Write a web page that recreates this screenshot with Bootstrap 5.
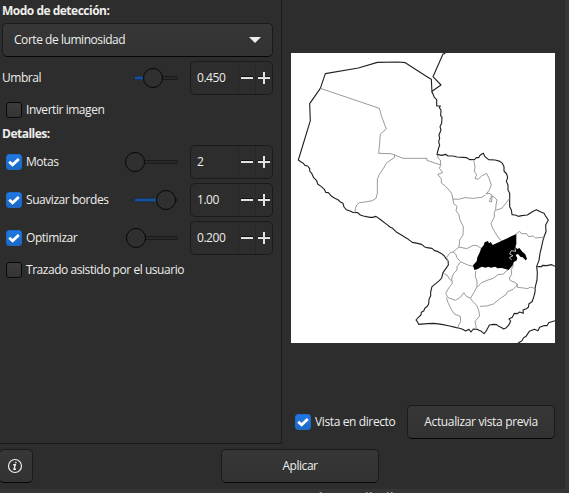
<!DOCTYPE html>
<html lang="es">
<head>
<meta charset="utf-8">
<meta name="viewport" content="width=device-width, initial-scale=1">
<title>Vectorizar mapa de bits</title>
<link href="https://cdn.jsdelivr.net/npm/bootstrap@5.3.0/dist/css/bootstrap.min.css" rel="stylesheet">
<style>
body{width:569px;height:493px;overflow:hidden;background:#353535;color:#eeeeec;font:12px/18px "Open Sans","Noto Sans",sans-serif;letter-spacing:-.45px}
.dialog{width:565px;height:489px;background:#2d2d2d}
.upper{height:444px}
.settings{width:282px;border-right:1px solid #1b1b1b;border-bottom:1px solid #1b1b1b;padding:2px 8px 0 2px}
.heading{font-weight:700;height:18px;letter-spacing:-.5px}
.heading.details{margin-top:3px}
.gtk-btn{border:1px solid #1b1b1b;border-bottom-color:#070707;border-radius:5px;background:linear-gradient(#373737,#323232);color:#eeeeec;font-size:12px;line-height:18px;letter-spacing:inherit;height:34px;padding:0}
.gtk-btn:hover{background:#3a3a3a;color:#fff}
.mode{height:34px;margin:3px 0 2px;padding:0 11px 0 11px;width:271px}
.opt{height:38px;width:271px}
.opt.short{height:25px}
.opt .name{width:131px;flex:none}
.tick{width:16px;height:16px;flex:none;border:1px solid #090909;border-radius:3px;background:linear-gradient(#3c3c3c,#343434);margin:0 4px}
.tick.on{background:linear-gradient(#2078e2,#1b68c6);border-color:#1d6bc9}
.tick svg{display:block;width:14px;height:14px}
.slider{width:50px;height:22px;flex:none;overflow:visible}
.rail{stroke:#1b1b1b;stroke-width:4;stroke-linecap:round}
.groove{stroke:#292929;stroke-width:2;stroke-linecap:round}
.fill{stroke:#15539e;stroke-width:3;stroke-linecap:round}
.knob{fill:#303030;stroke:#070707}
.spin{width:83px;height:34px;border:1px solid #1b1b1b;border-radius:5px;margin-left:auto}
.spin .num{width:47px;padding-left:6px}
.spin .pm{display:block;width:34px;height:32px;flex:none}
.preview{width:283px;padding-top:53px}
.map{display:block;width:264px;height:290px;background:#fff;margin-left:9px}
.live{margin-top:62px;padding-left:9px;width:273px;letter-spacing:-.38px}
.update{width:148px;letter-spacing:-.35px}
.actions{height:45px;padding-top:5px}
.info{width:34px;margin-left:-1px;padding-right:2px}
.apply{width:158px;margin-left:188px}
.under{height:4px;overflow:hidden;color:#a5a5a5;padding-left:288px;font-size:14px;font-weight:600;letter-spacing:0}
</style>
</head>
<body>
<svg width="0" height="0" class="position-absolute">
 <symbol id="check" viewBox="0 0 14 14"><path d="M2.2 6.7 5.6 9.8 11.8 4" fill="none" stroke="#fff" stroke-width="2.8"/></symbol>
 <symbol id="steps" viewBox="0 0 34 32"><path d="M.5 0V32M17.5 0V32" stroke="#272727"/><path d="M3 14.5H15M20 14.5H32" stroke="#111"/><path d="M3 16H15M20 16H32M26 10V22" stroke="#e2e2e0" stroke-width="2"/></symbol>
</svg>
<main class="dialog">
 <div class="upper d-flex">
  <section class="settings flex-shrink-0">
   <div class="heading">Modo de detección:</div>
   <button class="btn gtk-btn mode d-flex align-items-center justify-content-between"><span>Corte de luminosidad</span><svg width="12" height="7"><path d="M0 0H12L6 6Z" fill="#eeeeec"/></svg></button>
   <div class="opt d-flex align-items-center"><span class="name">Umbral</span><svg class="slider"><path class="rail" d="M3 11H43"/><path class="groove" d="M3 11H43"/><path class="fill" d="M3 11H15"/><circle class="knob" cx="20" cy="11" r="9.5"/></svg><div class="spin d-flex align-items-center"><span class="num">0.450</span><svg class="pm"><use href="#steps"/></svg></div></div>
   <div class="opt short d-flex align-items-center"><span class="tick"></span>Invertir imagen</div>
   <div class="heading details">Detalles:</div>
   <div class="opt d-flex align-items-center"><div class="name d-flex align-items-center"><span class="tick on"><svg><use href="#check"/></svg></span>Motas</div><svg class="slider"><path class="rail" d="M3 11H43"/><path class="groove" d="M3 11H43"/><circle class="knob" cx="2" cy="11" r="9.5"/></svg><div class="spin d-flex align-items-center"><span class="num">2</span><svg class="pm"><use href="#steps"/></svg></div></div>
   <div class="opt d-flex align-items-center"><div class="name d-flex align-items-center"><span class="tick on"><svg><use href="#check"/></svg></span>Suavizar bordes</div><svg class="slider"><path class="rail" d="M3 11H43"/><path class="groove" d="M3 11H43"/><path class="fill" d="M3 11H25"/><circle class="knob" cx="33" cy="11" r="9.5"/></svg><div class="spin d-flex align-items-center"><span class="num">1.00</span><svg class="pm"><use href="#steps"/></svg></div></div>
   <div class="opt d-flex align-items-center"><div class="name d-flex align-items-center"><span class="tick on"><svg><use href="#check"/></svg></span>Optimizar</div><svg class="slider"><path class="rail" d="M3 11H43"/><path class="groove" d="M3 11H43"/><circle class="knob" cx="3" cy="11" r="9.5"/></svg><div class="spin d-flex align-items-center"><span class="num">0.200</span><svg class="pm"><use href="#steps"/></svg></div></div>
   <div class="opt short d-flex align-items-center"><span class="tick"></span>Trazado asistido por el usuario</div>
  </section>
  <section class="preview">
   <svg class="map" viewBox="18 39 792 870" fill="none" stroke-linejoin="round">
    <!-- national border -->
    <g stroke="#222" stroke-width="3.4">
     <path d="M441 159 439 118 426 110 361 68 340 66 277 67 220 84 121 101 106 145 74 191 76 242 40 360 48 366 55 370 60 376 68 378 74 386 74 393 80 400 86 413 95 422 98 432 109 440 118 448 122 457 130 458 138 467 148 474 160 480 165 485 174 490 177 501 184 509 195 513 203 517 218 518 226 525 235 528 255 532 263 532 273 529 284 537 305 553 315 561 323 565 335 577 348 584 360 592 370 598 382 607 398 610 410 613 418 620 426 623 441 625 449 632 459 635 470 641 478 648 483 656 490 664 490 675 483 685 474 698 470 714 463 722 453 730 441 740 437 756 437 767 432 778 431 792 426 800 420 804 416 813 409 817 408 825 400 832 393 840 397 845 401 853 426 851 447 850 470 853 494 858 514 863 520 864 531 867 542 873 552 868 558 876 565 867 576 868 582 871 589 874 597 881 603 874 610 861 613 855 625 853 635 854 641 859 648 862 656 867 664 863 672 854 677 843 672 837 682 832 688 820 696 821 704 816 715 820 714 810 724 806 730 802 732 791 741 785 745 775 750 757 751 740 756 720 757 698 755 679 762 661 765 640 769 624 773 605 777 590 783 575 782 555 790 540 783 530 777 520 766 515 754 509 742 515 727 525 710 527 700 529 690 525 681 524 679 510 674 500 674 480 674 460 669 450 669 435 664 424 668 413 665 402 657 393 657 380 652 370 645 364 630 360 611 359 600 350 595 340 591 342 585 346 581 353 574 353 569 358 555 359 545 353 534 352 516 351 504 348 489 348 482 343 470 346 456 343 461 323 464 316 461 305 464 295 462 285 468 270 465 260 470 250 471 232 467 227 468 210 463 203 466 198 455 198 455 179 448 172 443 160 441 154 468 135 444 110 474 42 481 40"/>
     <path d="M757 680 770 680 772 676 785 677 800 674 810 679M699 909 710 903 716 893 723 889 733 874 748 868 759 872 764 862 776 857 786 857 791 848 810 842" />
    </g>
    <!-- department borders -->
    <g stroke="#8a8a8a" stroke-width="2.6">
     <path d="M106 145 283 205 290 230 304 267 286 282 284 310 281 340 318 341 329 345 354 355 426 355 426 361 467 375M329 345 328 353 305 368 296 384 283 403 277 418 277 460 273 475 262 482 240 486 223 488 215 495 211 506 210 518"/>
     <path d="M457 345 460 355 466 360 467 376 463 385 469 392 473 398 458 403 468 415 470 430 481 438 492 450 500 460 503 475 506 491 516 499 513 512 522 524 525 540 535 560 534 585 524 600 522 621M504 477 520 478 540 473 565 475 590 472 601 465M566 359 570 380 568 395 575 404 570 415 579 418 590 408 605 400 612 415 619 435 613 450 604 462 612 460 621 465 620 486 613 484 619 470 626 470 636 480 633 495 632 508 628 518 628 531 618 550 623 565 635 585 642 596 650 602M674 475 665 487 650 505 632 511"/>
     <path d="M522 621 545 626 565 616 576 617 588 625M522 621 510 631 504 636 496 638 485 652 490 670M504 636 512 642 516 653 526 665 548 675 570 680M526 667 516 680 516 690 506 700 500 715 502 730 491 744 482 760 489 773 512 781 527 771 536 758 545 770 555 773 564 785 575 796 581 811 584 828 570 844 573 858 572 869M473 699 486 705 494 718 500 722M484 773 490 790 500 810 508 822 526 829 527 845 518 861M572 693 571 710 576 723 576 740 567 757 557 774M576 742 590 728 609 720 625 715 639 704 656 702 662 694 669 690M585 799 605 798 625 792 640 780 650 772 662 765 668 755 684 748 694 738 697 732 689 727 676 722 673 714 680 703 679 689 686 674M697 732 697 742 716 744 728 746 736 741 752 746M692 583 704 574 709 581 725 581 731 590 745 588 752 594 768 592 780 594"/>
    </g>
    <!-- highlighted department -->
    <path fill="#000" d="M564 676 575 664 577 652 583 640 589 624 596 616 599 607 609 603 612 610 617 606 623 615 694 582 694 612 691 622 697 627 703 624 712 635 721 643 726 657 722 661 713 652 706 650 699 642 692 645 697 655 694 662 687 665 683 676 671 690 661 687 650 684 638 685 630 680 618 683 610 680 602 683 590 680 577 688 568 690Z"/>
    <path stroke="#ddd" stroke-width="2.5" d="M690 625 692 634 679 632 674 642 684 647 673 653 680 660"/>
   </svg>
   <div class="live d-flex align-items-center"><span class="tick on"><svg><use href="#check"/></svg></span><span>Vista en directo</span><button class="btn gtk-btn update ms-auto">Actualizar vista previa</button></div>
  </section>
 </div>
 <div class="actions d-flex">
  <button class="btn gtk-btn info d-flex align-items-center justify-content-center" aria-label="Información"><svg width="16" height="16" viewBox="0 0 16 16" fill="none" stroke="#eeeeec"><circle cx="8" cy="8" r="6.5" stroke-width="1.2"/><path d="M6.2 6.8H8.3L7 11.2H9" stroke-width="1.4"/><circle cx="8.8" cy="4.6" r=".65" fill="#eeeeec" stroke-width=".5"/></svg></button>
  <button class="btn gtk-btn apply">Aplicar</button>
 </div>
</main>
<div class="under"><div>Ayudar a Mihail</div></div>
</body>
</html>
